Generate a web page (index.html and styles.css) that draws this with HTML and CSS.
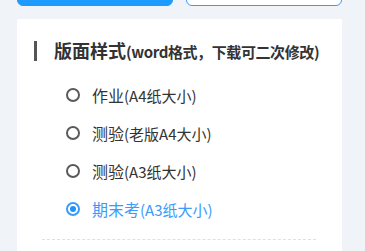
FILE: index.html
```html
<!DOCTYPE html>
<html lang="zh-CN">
<head>
    <meta charset="UTF-8">
    <meta name="viewport" content="width=device-width, initial-scale=1.0">
    <title>版面样式</title>
    <link rel="stylesheet" href="styles.css">
</head>
<body>
    <div class="btn-row">
        <button class="btn btn-primary"></button>
        <button class="btn btn-outline"></button>
    </div>

    <div class="card">
        <h3 class="card-title">版面样式<small>(word格式，下载可二次修改)</small></h3>

        <ul class="option-list">
            <li class="option">
                <span class="radio"></span>
                <span class="name">作业</span><span class="size">(A4纸大小)</span>
            </li>
            <li class="option">
                <span class="radio"></span>
                <span class="name">测验</span><span class="size">(老版A4大小)</span>
            </li>
            <li class="option">
                <span class="radio"></span>
                <span class="name">测验</span><span class="size">(A3纸大小)</span>
            </li>
            <li class="option active">
                <span class="radio"></span>
                <span class="name">期末考</span><span class="size">(A3纸大小)</span>
            </li>
        </ul>

        <div class="divider"></div>
    </div>
</body>
</html>
```

FILE: styles.css
```css
body {
    margin: 0;
    background-color: #f0f3f7;
    font-family: "Noto Sans CJK SC", "Noto Sans", sans-serif;
    color: #333;
}
.btn-row {
    display: flex;
    gap: 13px;
    margin: -34px 23px 0 17px;
}
.btn {
    flex: 1;
    height: 40px;
    border-radius: 6px;
    padding: 0;
}
.btn-primary {
    background-color: #1e9bff;
    border: 1px solid #1e9bff;
}
.btn-outline {
    background-color: white;
    border: 1px solid #3a9bf5;
}
.card {
    background-color: white;
    margin: 13px 23px 0 17px;
    padding: 22px 26px 20px 25px;
    height: 300px;
}
.card-title {
    margin: 0 0 0 -8px;
    padding-left: 17px;
    border-left: 3px solid #555;
    font-size: 18px;
    line-height: 18px;
    font-weight: bold;
    color: #333;
    white-space: nowrap;
}
.card-title small {
    font-size: 15px;
    letter-spacing: -0.4px;
}
.option-list {
    list-style: none;
    margin: 15px 0 0 0;
    padding: 0 0 0 24px;
}
.option {
    display: flex;
    align-items: center;
    height: 38px;
    color: #333;
}
.radio {
    width: 10px;
    height: 10px;
    border: 2px solid #5a5a5a;
    border-radius: 50%;
    margin-right: 12px;
    position: relative;
}
.name {
    font-size: 16px;
}
.size {
    font-size: 15px;
}
.option.active {
    color: #3a9bfa;
}
.option.active .radio {
    border-color: #3a9bfa;
}
.option.active .radio::after {
    content: "";
    position: absolute;
    left: 2px;
    top: 2px;
    width: 6px;
    height: 6px;
    border-radius: 50%;
    background-color: #1e90ff;
}
.divider {
    margin-top: 11px;
    border-top: 1px dashed #e0e0e0;
}
```
